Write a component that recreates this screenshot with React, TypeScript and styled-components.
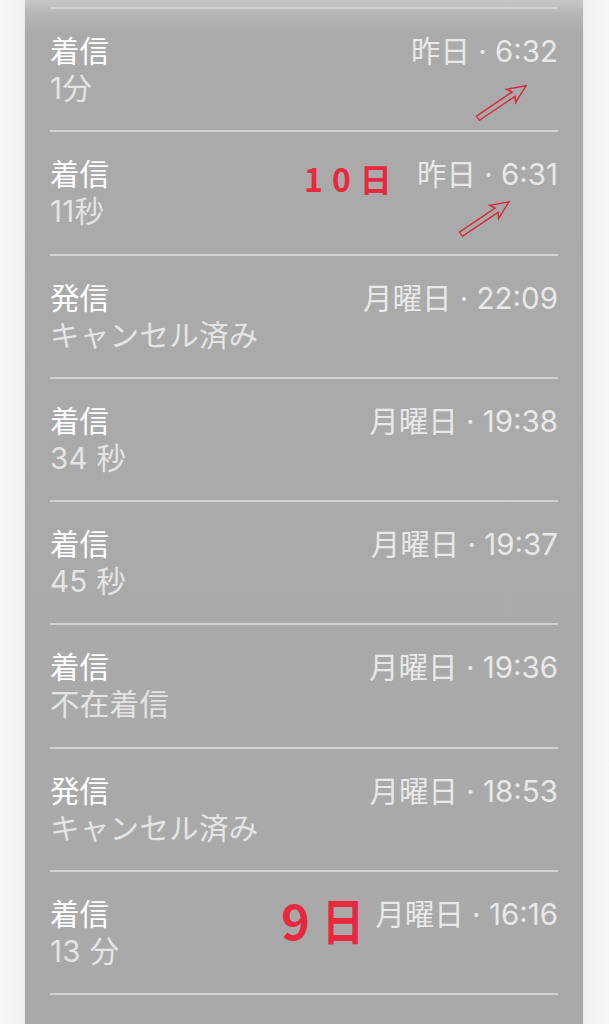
import React from "react";
import styled, { createGlobalStyle } from "styled-components";

const Global = createGlobalStyle`
  html, body { margin: 0; padding: 0; background: #f3f3f3; }
  body { font-family: Inter, "Noto Sans CJK JP", sans-serif; }
`;

const Page = styled.div`
  width: 609px;
  height: 1024px;
  overflow: hidden;
  background: linear-gradient(90deg, #f6f6f6 0px, #f1f1f1 25px, #f1f1f1 583px, #f6f6f6 609px);
  display: flex;
`;

const Panel = styled.div`
  margin-left: 25px;
  width: 558px;
  height: 1024px;
  background: linear-gradient(180deg, #c6c6c6 0px, #b4b4b4 16px, #aaaaaa 34px, #a9a9a9 100%);
  padding: 7px 25px 0 25px;
  box-sizing: border-box;
  box-shadow: 0 0 3px rgba(0, 0, 0, 0.06);
`;

const List = styled.div`
  border-top: 2px solid #d2d2d2;
  display: flex;
  flex-direction: column;
`;

const Row = styled.div`
  position: relative;
  flex: none;
  height: 123.25px;
  box-sizing: border-box;
  border-bottom: 2px solid #d2d2d2;
  display: flex;
  justify-content: space-between;
  align-items: flex-start;
  padding-top: 24px;
`;

const Left = styled.div`
  display: flex;
  flex-direction: column;
`;

const Title = styled.div`
  font-size: 29.5px;
  line-height: 37px;
  color: #ffffff;
  font-weight: 400;
`;

const Sub = styled.div`
  font-size: 29.5px;
  line-height: 37px;
  color: #e4e4e4;
  font-weight: 400;
  letter-spacing: 0.3px;
`;

const Time = styled.div`
  font-size: 29.5px;
  line-height: 37px;
  color: #e8e8e8;
  font-weight: 400;
  white-space: nowrap;
`;

const Mark = styled.div<{ $size: number; $left: number; $top: number; $spacing: number; $weight: number }>`
  position: absolute;
  left: ${(p) => p.$left}px;
  top: ${(p) => p.$top}px;
  font-size: ${(p) => p.$size}px;
  line-height: 1;
  font-weight: ${(p) => p.$weight};
  color: #e8283e;
  letter-spacing: ${(p) => p.$spacing}px;
  white-space: nowrap;
  font-family: "Noto Sans CJK JP", sans-serif;
`;

const NarrowGlyph = styled.span`
  display: inline-block;
  transform: scaleX(0.86);
  transform-origin: left center;
`;

const ArrowBox = styled.svg<{ $left: number; $top: number }>`
  position: absolute;
  left: ${(p) => p.$left}px;
  top: ${(p) => p.$top}px;
  overflow: visible;
`;

function Arrow({ left, top }: { left: number; top: number }) {
  const pts = "-29,-2.6 14,-2.6 11,-8 29,0 11,8 14,2.6 -29,2.6";
  return (
    <ArrowBox $left={left - 30} $top={top - 20} width={60} height={40} viewBox="-30 -20 60 40">
      <g transform="rotate(-34)">
        <polygon points={pts} fill="none" stroke="#d8283c" strokeWidth={1.4} strokeLinejoin="miter" />
      </g>
    </ArrowBox>
  );
}

type Call = { title: string; sub: string; time: string };

const calls: Call[] = [
  { title: "着信", sub: "1分", time: "昨日 · 6:32" },
  { title: "着信", sub: "11秒", time: "昨日 · 6:31" },
  { title: "発信", sub: "キャンセル済み", time: "月曜日 · 22:09" },
  { title: "着信", sub: "34 秒", time: "月曜日 · 19:38" },
  { title: "着信", sub: "45 秒", time: "月曜日 · 19:37" },
  { title: "着信", sub: "不在着信", time: "月曜日 · 19:36" },
  { title: "発信", sub: "キャンセル済み", time: "月曜日 · 18:53" },
  { title: "着信", sub: "13 分", time: "月曜日 · 16:16" },
];

export default function App() {
  return (
    <>
      <Global />
      <Page>
        <Panel>
          <List>
            {calls.map((c, i) => (
              <Row key={i}>
                <Left>
                  <Title>{c.title}</Title>
                  <Sub>{c.sub}</Sub>
                </Left>
                <Time>{c.time}</Time>
                {i === 0 && <Arrow left={452} top={93} />}
                {i === 1 && <Arrow left={435} top={86} />}
                {i === 1 && (
                  <Mark $size={32} $left={254} $top={30} $spacing={9} $weight={700}>
                    10日
                  </Mark>
                )}
                {i === 7 && (
                  <Mark $size={49} $left={231} $top={22} $spacing={12} $weight={600}>
                    9<NarrowGlyph>日</NarrowGlyph>
                  </Mark>
                )}
              </Row>
            ))}
          </List>
        </Panel>
      </Page>
    </>
  );
}
